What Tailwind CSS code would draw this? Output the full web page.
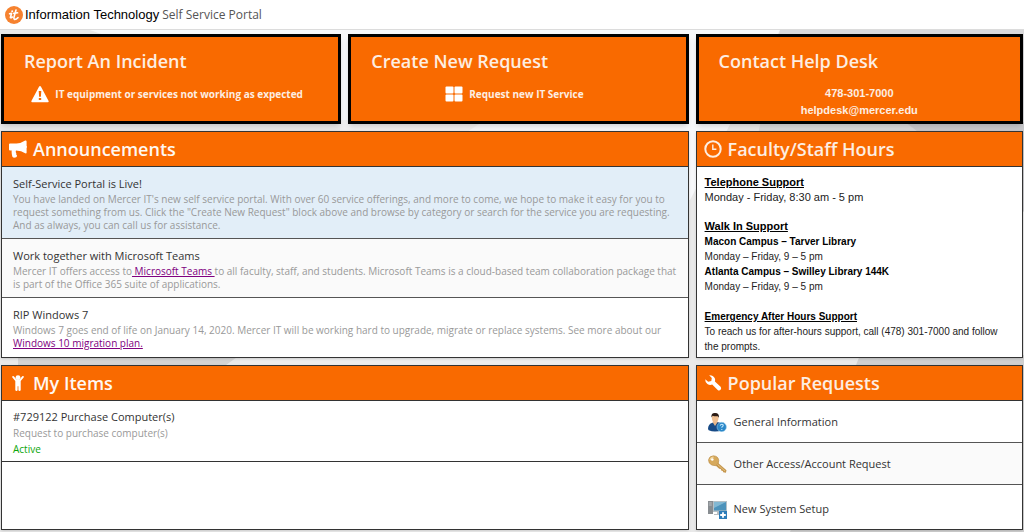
<!DOCTYPE html>
<html lang="en">
<head>
<meta charset="utf-8">
<title>Self Service Portal</title>
<script src="https://cdn.jsdelivr.net/npm/@tailwindcss/browser@4"></script>
</head>
<body class="relative isolate min-h-screen flex flex-col bg-[#ececec] font-['Open_Sans',sans-serif] text-[#333]">
<!-- backdrop facets -->
<svg class="absolute inset-0 -z-10 h-full w-full" viewBox="0 0 1024 532" preserveAspectRatio="none" aria-hidden="true">
  <rect width="1024" height="532" fill="#e9e9e9"/>
  <path d="M90 30H780L690 200H340V120Z" fill="#f7f8fa"/>
  <path d="M340 120h145l-30 20H340z" fill="#f0f0f0"/>
  <path d="M780 30h244v100l-60 90H740z" fill="#d9d9db"/>
  <path d="M905 122h119v90z" fill="#c9c9cc"/>
  <path d="M18 355H240L226 365H18z" fill="#d4d4d4"/>
  <path d="M240 355H690V532H240z" fill="#ededed"/>
  <path d="M860 355H1024V532H790z" fill="#d0d0d0"/>
</svg>

<header class="flex h-[30px] items-center border-b border-[#dcdcdc] bg-white pl-[5px]">
  <svg class="h-[18px] w-[18px]" viewBox="0 0 18 18" aria-hidden="true">
    <circle cx="9" cy="9" r="9" fill="#f6822f"/>
    <g fill="none" stroke="#fff" stroke-width="1.6" stroke-linecap="round" stroke-linejoin="round">
      <path d="M4.6 7.8L6.6 7.4L5.4 11.2Q5.4 12.4 7.4 11"/>
      <path d="M11 4L8.9 11.6Q8.6 14.2 11.4 13L13 11.6M8.8 7.4L12.6 6.8"/>
    </g>
    <circle cx="7.2" cy="5.2" r="1" fill="#fff"/>
  </svg>
  <span class="ml-[2px] font-['Liberation_Sans',sans-serif] text-[13px] text-black">Information Technology</span>
  <span class="ml-[3px] text-[12px] text-[#555]">Self Service Portal</span>
</header>

<main class="grid flex-1 grid-cols-[21fr_10fr] grid-rows-[auto_auto_1fr] gap-[7px] px-px pt-1 pb-0.5">
  <div class="grid grid-cols-2 gap-[7px]">
    <a href="#" class="flex flex-col border-[3px] border-black bg-[#f96a00] px-5 pt-2.5 text-[#fdeee2] shadow-md">
      <h2 class="text-[18px] leading-7 font-semibold">Report An Incident</h2>
      <p class="mt-2.5 flex items-center justify-center gap-1.5 pr-2 text-[10px] leading-[17px] font-bold">
        <svg class="h-[18px] w-[18px]" viewBox="0 0 18 18" aria-hidden="true"><path d="M9 1Q9.6 1 10 1.8L17.6 16Q18 17.3 16.8 17.3H1.2Q0 17.3.4 16L8 1.8Q8.4 1 9 1Z" fill="#fff"/><path d="M7.7 6h2.6L9.9 11.7H8.1zM7.8 12.9h2.4v2.2H7.8z" fill="#f96a00"/></svg>
        IT equipment or services not working as expected</p>
    </a>
    <a href="#" class="flex flex-col border-[3px] border-black bg-[#f96a00] px-5 pt-2.5 text-[#fdeee2] shadow-md">
      <h2 class="text-[18px] leading-7 font-semibold">Create New Request</h2>
      <p class="mt-2.5 flex items-center justify-center gap-1.5 pr-2 text-[10px] leading-[17px] font-bold">
        <svg class="h-[18px] w-[18px]" viewBox="0 0 18 18" fill="#fff" aria-hidden="true"><rect x=".5" y="1.5" width="8" height="7" rx="1"/><rect x="9.5" y="1.5" width="8" height="7" rx="1"/><rect x=".5" y="9.5" width="8" height="7" rx="1"/><rect x="9.5" y="9.5" width="8" height="7" rx="1"/></svg>
        Request new IT Service</p>
    </a>
  </div>
  <section class="border-[3px] border-black bg-[#f96a00] px-5 pt-2.5 pb-0.5 text-[#fdeee2] shadow-md">
    <h2 class="text-[18px] leading-7 font-semibold">Contact Help Desk</h2>
    <p class="mt-2.5 text-center font-['Liberation_Sans',sans-serif] text-[11px] leading-[17px] font-bold">478-301-7000<br><a href="mailto:helpdesk@mercer.edu">helpdesk@mercer.edu</a></p>
  </section>

  <section class="border border-[#333] bg-white shadow">
    <h2 class="flex h-[35px] items-center gap-1.5 border-b border-[#333] bg-[#f96a00] pl-[7px] text-[18px] font-semibold text-[#fff8f2]">
      <svg class="h-[18px] w-[18px]" viewBox="0 0 18 18" fill="#fff" aria-hidden="true"><path d="M0 4.3Q0 3.4 1 3.4H7.5Q12.5 3.3 16.2.6Q17.6.3 17.6 1.5V6.1Q18.5 7 17.6 8V12.7Q17.5 13.8 16.2 13.3Q12.5 10.6 7 10.6Q6.3 12.3 7.4 13.4Q6.8 14.3 8 15.5Q8.2 17.6 5 17.7Q3.6 17.6 3.3 16.5Q2.4 13.6 2.7 10.5H1Q0 10.4 0 9.4Z"/></svg>
      Announcements</h2>
    <article class="border-b border-[#555] bg-[#e2eef8] px-[11px] pt-2 pb-1.5">
      <h3 class="text-[11px] leading-[18px]">Self-Service Portal is Live!</h3>
      <p class="text-[10px] leading-[13px] text-[#999]">You have landed on Mercer IT's new self service portal. With over 60 service offerings, and more to come, we hope to make it easy for you to<br>request something from us. Click the "Create New Request" block above and browse by category or search for the service you are requesting.<br>And as always, you can call us for assistance.</p>
    </article>
    <article class="border-b border-[#555] bg-[#fafafa] px-[11px] pt-2 pb-1.5">
      <h3 class="text-[11px] leading-[18px]">Work together with Microsoft Teams</h3>
      <p class="text-[10px] leading-[13px] text-[#999]">Mercer IT offers access to<a href="#" class="text-[#800080] underline"> Microsoft Teams </a>to all faculty, staff, and students. Microsoft Teams is a cloud-based team collaboration package that<br>is part of the Office 365 suite of applications.</p>
    </article>
    <article class="px-[11px] pt-2 pb-[7px]">
      <h3 class="text-[11px] leading-[18px]">RIP Windows 7</h3>
      <p class="text-[10px] leading-[13px] text-[#999]">Windows 7 goes end of life on January 14, 2020. Mercer IT will be working hard to upgrade, migrate or replace systems. See more about our<br><a href="#" class="text-[#800080] underline">Windows 10 migration plan.</a></p>
    </article>
  </section>

  <section class="border border-[#333] bg-white shadow">
    <h2 class="flex h-[35px] items-center gap-1.5 border-b border-[#333] bg-[#f96a00] pl-[7px] text-[18px] font-semibold text-[#fdeee2]">
      <svg class="h-[18px] w-[18px]" viewBox="0 0 18 18" fill="none" stroke="#fdeee2" aria-hidden="true"><circle cx="9" cy="9" r="7.7" stroke-width="2"/><path d="M8.8 4.5V9.3H12.4" stroke-width="1.4"/></svg>
      Faculty/Staff Hours</h2>
    <div class="px-2 pt-2 font-['Liberation_Sans',sans-serif] text-[10px] leading-[15px] text-[#222]">
      <h3 class="text-[11px] font-bold text-black underline">Telephone Support</h3>
      <p class="text-[11px]">Monday - Friday, 8:30 am - 5 pm</p>
      <h3 class="mt-[14px] text-[11px] font-bold text-black underline">Walk In Support</h3>
      <p><b class="text-black">Macon Campus – Tarver Library</b><br>Monday – Friday, 9 – 5 pm<br><b class="text-black">Atlanta Campus – Swilley Library 144K</b><br>Monday – Friday, 9 – 5 pm</p>
      <h3 class="mt-[15px] font-bold text-black underline">Emergency After Hours Support</h3>
      <p>To reach us for after-hours support, call (478) 301-7000 and follow<br>the prompts.</p>
    </div>
  </section>

  <section class="border border-[#333] bg-white shadow">
    <h2 class="flex h-[35px] items-center gap-1.5 border-b border-[#333] bg-[#f96a00] pl-[7px] text-[18px] font-semibold text-[#fff8f2]">
      <svg class="h-[18px] w-[18px]" viewBox="0 0 18 18" fill="#fff" aria-hidden="true"><circle cx="9" cy="3.6" r="2.4"/><path d="M3.4 2.3Q4 1.6 4.8 2.3L7.3 5.2H10.7L13.2 2.3Q14 1.6 14.7 2.3Q15.1 3 14.6 3.6L11.7 7.1V16Q11.5 17 10.5 17Q9.5 16.9 9.4 16V12.2H8.6V16Q8.5 17 7.5 17Q6.5 16.9 6.3 16V7.1L3.4 3.6Q2.9 3 3.4 2.3Z"/></svg>
      My Items</h2>
    <article class="border-b border-[#333] px-[11px] pt-[7px] pb-1">
      <h3 class="text-[11px] leading-[17px]">#729122 Purchase Computer(s)</h3>
      <p class="text-[10px] leading-4 text-[#999]">Request to purchase computer(s)</p>
      <p class="text-[10px] leading-4 text-[#0aa50a]">Active</p>
    </article>
  </section>

  <section class="flex flex-col border border-[#333] bg-white shadow">
    <h2 class="flex h-[35px] items-center gap-1.5 border-b border-[#333] bg-[#f96a00] pl-[7px] text-[18px] font-semibold text-[#fdeee2]">
      <svg class="h-[18px] w-[18px]" viewBox="0 0 18 18" aria-hidden="true"><path d="M5.2 1.2Q9 .9 10.8 4.2Q11.5 5.9 10.9 7.6L16.6 12.7Q17.7 14.2 16.6 15.7Q15.2 17 13.7 15.9L8.2 10.5Q5.8 11.5 3.4 9.9Q1 8.1 1.2 5.2L4.2 7.8L7.3 7L7.8 4.1Z" fill="#fff"/></svg>
      Popular Requests</h2>
    <ul class="flex flex-1 flex-col text-[11px]">
      <li class="flex h-[42px] border-b border-[#555]"><a href="#" class="flex flex-1 items-center gap-[7px] pt-0.5 pl-[11px]">
        <svg class="h-[19px] w-[19px]" viewBox="0 0 19 19" aria-hidden="true"><path d="M0 16Q0 11 4.5 9.8L7.5 9H9Q14 10 14.5 12V17Q7 20 .7 17.3Z" fill="#174a86"/><path d="M4.8 9.5L7 13L9.3 9.5V7H5z" fill="#e5b68c"/><ellipse cx="7.2" cy="5" rx="3.3" ry="4.2" fill="#efbf91"/><path d="M3.4 4.5Q3 0 7 .1Q11.5 0 10.9 4.8L9.8 3.2Q7 3.6 4.7 2.8Z" fill="#2a1a13"/><circle cx="13.7" cy="14" r="4.7" fill="#2b87c8" stroke="#9bcbea" stroke-width=".6"/><path d="M12.2 12.7Q12.4 11.2 13.8 11.2Q15.4 11.4 15.2 12.8Q13.7 13.8 13.8 14.8M13.8 16v1" fill="none" stroke="#b9e2fa" stroke-width="1.1"/></svg>
        General Information</a></li>
      <li class="flex h-[42px] border-b border-[#555] bg-[#fafafa]"><a href="#" class="flex flex-1 items-center gap-[7px] pt-0.5 pl-[11px]">
        <svg class="h-[19px] w-[19px]" viewBox="0 0 19 19" aria-hidden="true"><path d="M9 7L18.5 15.3L17.9 17.7L15.2 17.2L14.8 15.9L13.2 15.6L12.8 14L11.2 13.7L7 10Z" fill="#c5964d"/><path d="M.5 5Q1 1 5.5.8Q10.2 1.1 10.8 5.4Q10.9 9.8 7.5 10.7Q3.5 10.9 1.2 7.9Z" fill="#d6a95c" stroke="#b88942" stroke-width=".6"/><path d="M2 4.8Q2.6 2.4 5.6 2.1" stroke="#f1d59b" fill="none" stroke-width="1.2"/><circle cx="4.3" cy="4.5" r="1.3" fill="#fff"/><path d="M9.5 9.5L17 16" stroke="#eccb89" stroke-width=".8"/></svg>
        Other Access/Account Request</a></li>
      <li class="flex flex-1"><a href="#" class="flex flex-1 items-center gap-[7px] pt-1 pl-[11px]">
        <svg class="h-[19px] w-[19px]" viewBox="0 0 19 19" aria-hidden="true"><path d="M0 1H5V14H0z" fill="#888d91"/><path d="M.8 3h3M.8 5h3" stroke="#c9cdd0" stroke-width=".8"/><path d="M5 1H19V12H5z" fill="#b5c0c6"/><path d="M6 2H18V10.5H6z" fill="#4d93bb"/><path d="M6 2H18L6 8z" fill="#82b8d3"/><path d="M9 12h5v2h2v1H6v-1h3z" fill="#b9bec1"/><path d="M11 11H19V19H11z" fill="#2d7db9"/><path d="M15 12.2v5.6M12.2 15h5.6" stroke="#fff" stroke-width="1.8"/></svg>
        New System Setup</a></li>
    </ul>
  </section>
</main>
</body>
</html>
